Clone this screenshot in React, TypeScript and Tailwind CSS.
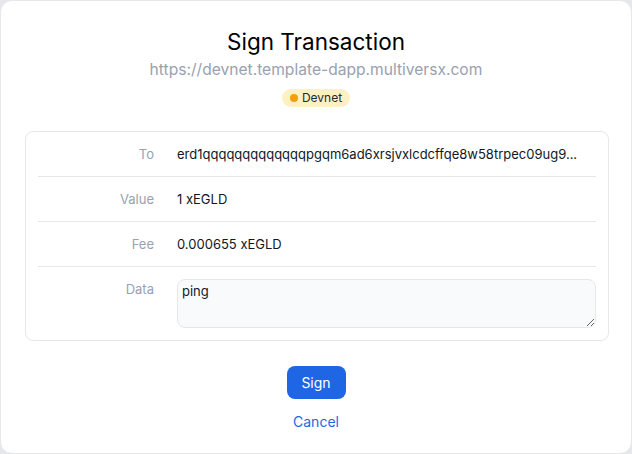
import React from 'react';

const rows = [
  { label: 'To', value: 'erd1qqqqqqqqqqqqqpgqm6ad6xrsjvxlcdcffqe8w58trpec09ug9...' },
  { label: 'Value', value: '1 xEGLD' },
  { label: 'Fee', value: '0.000655 xEGLD' },
];

const App: React.FC = () => {
  return (
    <div className="w-[632px] h-[454px] bg-[#e5e7eb] font-['Inter',sans-serif]">
      <div className="h-full flex flex-col items-center rounded-xl border border-gray-200 bg-white pt-[27px]">
        <h1 className="text-[22.5px] leading-7 text-black">Sign Transaction</h1>
        <p className="mt-1 text-[15.6px] leading-5 text-gray-400">https://devnet.template-dapp.multiversx.com</p>
        <span className="mt-[9px] flex items-center gap-1 rounded-full bg-[#fdf1c4] px-2 h-[18px] text-xs text-gray-800">
          <span className="w-2 h-2 rounded-full bg-[#f59e0b]" />
          Devnet
        </span>

        {/* Transaction details */}
        <div className="mt-6 ml-[2px] w-[584px] rounded-lg border border-gray-200 px-[12px]">
          {rows.map((row) => (
            <div key={row.label} className="flex items-center gap-[23px] border-b border-gray-200 py-3 text-[13px] leading-5">
              <span className="w-[116px] shrink-0 text-right text-gray-400">{row.label}</span>
              <span className="whitespace-nowrap text-gray-900">{row.value}</span>
            </div>
          ))}
          <div className="flex gap-[23px] pt-3 pb-[12px] text-[13px] leading-5">
            <span className="w-[116px] shrink-0 text-right text-gray-400">Data</span>
            <textarea
              readOnly
              defaultValue="ping"
              className="h-[49px] flex-1 rounded-lg border border-gray-200 bg-gray-50 px-[4px] py-[1px] text-gray-900 outline-none"
            />
          </div>
        </div>

        <button className="mt-[25px] h-[33px] w-[59px] rounded-lg bg-[#1f66e5] text-sm text-white">Sign</button>
        <button className="mt-[13px] text-sm leading-5 text-[#1f66e5]">Cancel</button>
      </div>
    </div>
  );
};

export default App;
